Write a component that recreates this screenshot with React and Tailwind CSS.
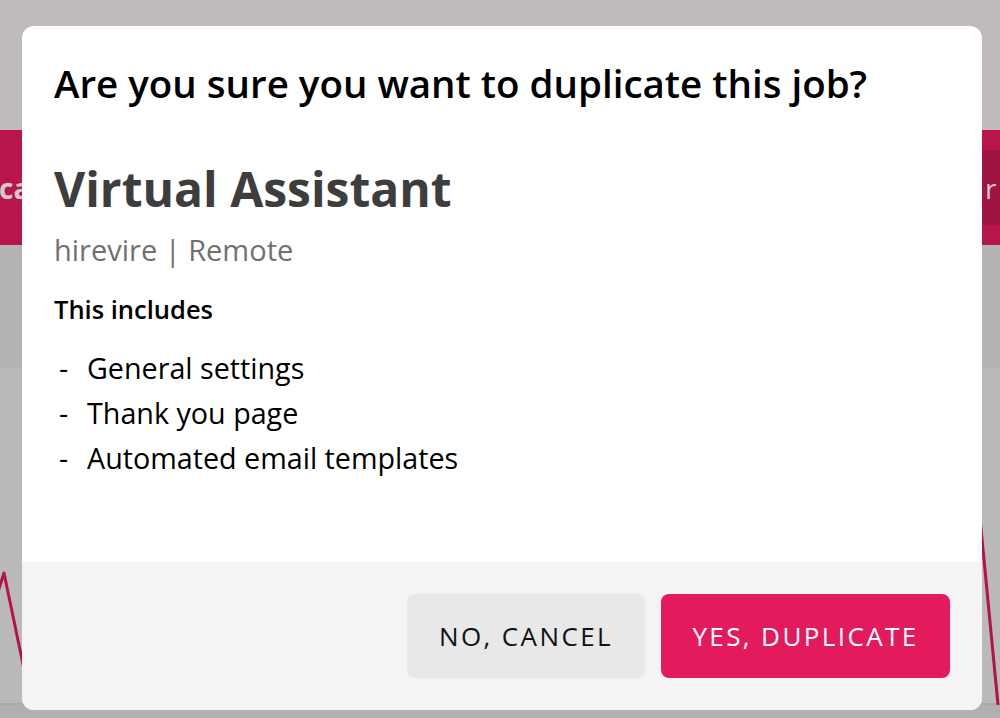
export default function App() {
  const items = ["General settings", "Thank you page", "Automated email templates"];

  return (
    <div
      className="relative w-[1000px] h-[718px] overflow-hidden bg-[#bfbbbc]"
      style={{ fontFamily: '"Open Sans", "Noto Sans", sans-serif' }}
    >
      {/* dimmed page behind the dialog */}
      <div className="h-[130px]" />
      <div className="h-[115px] bg-[#b8164b] flex justify-between items-center">
        <span className="ml-[-1px] text-[28px] font-bold text-[#d9c8cd] leading-none">ca</span>
        <div className="w-[18px] h-[75px] bg-[#9f1440] flex items-center overflow-hidden">
          <span className="ml-[3px] text-[28px] text-[#d9c8cd] leading-none">r</span>
        </div>
      </div>
      <div className="h-[123px] bg-[#b5b2b3]" />
      <div className="h-[337px] bg-[#bababa] border-b-2 border-[#a9a9a9]">
        <svg width="1000" height="337" viewBox="0 0 1000 337" className="block">
          <polyline
            points="-4,230 4,205 30,330"
            fill="none"
            stroke="#b5124a"
            strokeWidth="3"
            strokeLinejoin="round"
          />
          <polyline points="980,150 998,337" fill="none" stroke="#b5124a" strokeWidth="3" />
        </svg>
      </div>
      <div className="h-[13px] bg-[#b0b0b0]" />

      {/* dialog */}
      <div className="absolute left-[22px] top-[26px] w-[960px] h-[684px] bg-white rounded-[12px] overflow-hidden flex flex-col">
        <div className="flex-1 px-[32px] pt-[31px]">
          <h1 className="text-[38.5px] font-semibold text-black leading-[52px]">
            Are you sure you want to duplicate this job?
          </h1>
          <h2 className="mt-[48px] text-[48px] font-bold text-[#3d3d3d] leading-[64px]">
            Virtual Assistant
          </h2>
          <p className="mt-[10px] text-[29px] text-[#707070] leading-[38px]">hirevire | Remote</p>
          <p className="mt-[23px] text-[25.5px] font-semibold text-black leading-[34px]">This includes</p>
          <ul className="mt-[19px]">
            {items.map((t) => (
              <li key={t} className="flex text-[28.7px] text-black leading-[45px]">
                <span className="w-[33px] pl-[5px]">-</span>
                <span>{t}</span>
              </li>
            ))}
          </ul>
        </div>
        <div className="h-[148px] bg-[#f4f4f4] flex justify-end items-start pt-[32px] pr-[32px] gap-[16px]">
          <button className="w-[238px] h-[84px] rounded-[8px] bg-[#e8e8e8] text-[26px] tracking-[2.4px] text-[#111]">
            NO, CANCEL
          </button>
          <button className="w-[289px] h-[84px] rounded-[8px] bg-[#e31a5c] text-[26px] tracking-[2.4px] text-white">
            YES, DUPLICATE
          </button>
        </div>
      </div>
    </div>
  );
}
